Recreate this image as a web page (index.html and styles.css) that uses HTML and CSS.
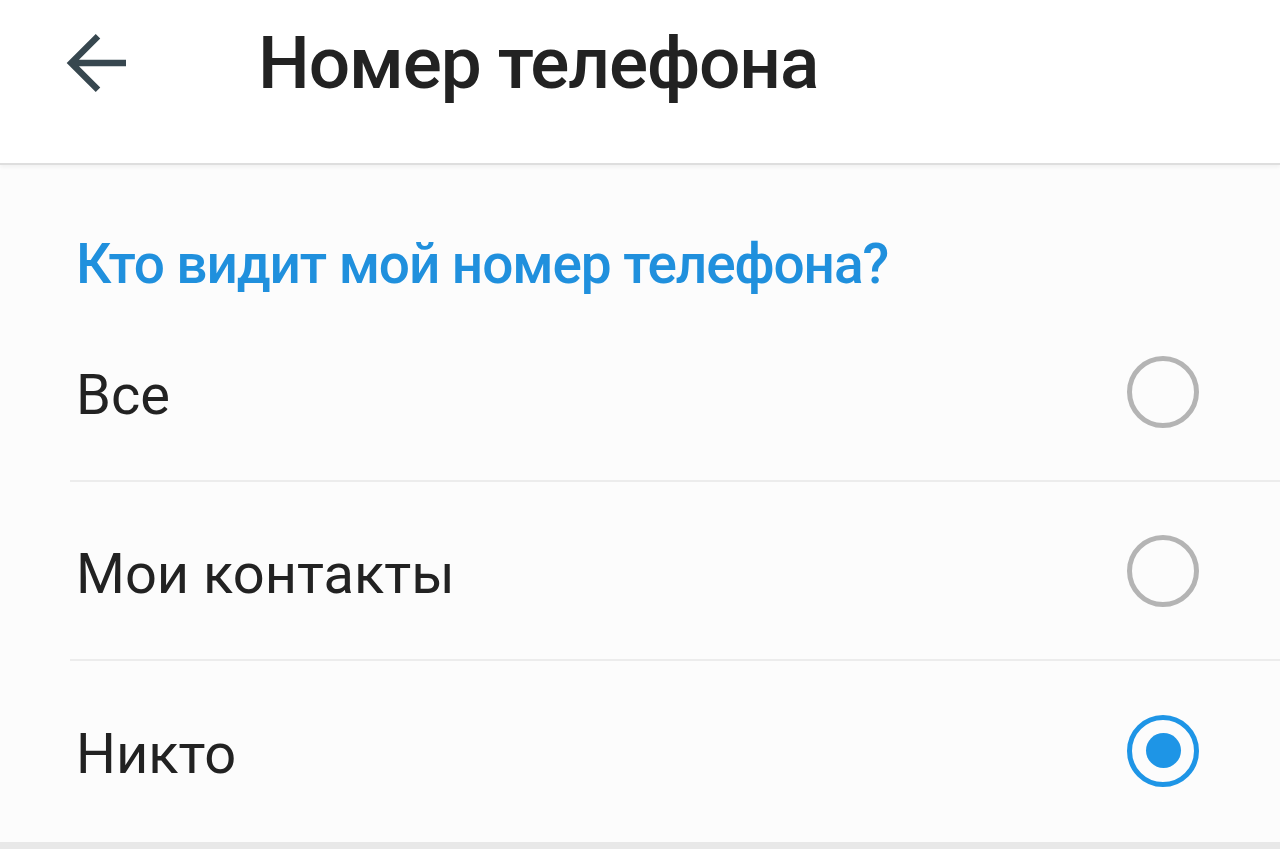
FILE: index.html
```html
<!DOCTYPE html>
<html lang="ru">
<head>
  <meta charset="UTF-8">
  <title>Номер телефона</title>
  <meta name="viewport" content="width=device-width, initial-scale=1.0">
  <link rel="stylesheet" href="styles.css">
</head>
<body>
  <header class="topbar">
    <button class="back" aria-label="Назад">
      <svg width="64" height="64" viewBox="0 0 16 16">
        <path d="M15 8H2M8 1.3L1.3 8L8 14.7" fill="none" stroke="#37474f" stroke-width="1.6"/>
      </svg>
    </button>
    <h1>Номер телефона</h1>
  </header>

  <main class="section">
    <h2>Кто видит мой номер телефона?</h2>
    <ul class="options">
      <li class="option">
        <span>Все</span>
        <span class="radio"></span>
      </li>
      <li class="option">
        <span>Мои контакты</span>
        <span class="radio"></span>
      </li>
      <li class="option">
        <span>Никто</span>
        <span class="radio checked"></span>
      </li>
    </ul>
  </main>
  <div class="bottom"></div>
</body>
</html>
```

FILE: styles.css
```css
*{box-sizing:border-box;margin:0;padding:0;}
body{
  font-family:Roboto,"Noto Sans",sans-serif;
  background:#fcfcfc;
  color:#222;
  height:849px;
  overflow:hidden;
  display:flex;
  flex-direction:column;
}
.topbar{
  height:165px;
  display:flex;
  align-items:center;
  background:#fff;
  border-bottom:2px solid #dedede;
  box-shadow:0 2px 4px rgba(0,0,0,0.05);
  padding-left:66px;
  padding-bottom:38px;
  position:relative;
  z-index:1;
}
.back{
  border:none;
  background:none;
  display:flex;
  width:64px;
  height:64px;
}
.topbar h1{
  margin-left:128px;
  font-size:73px;
  font-weight:500;
  color:#222;
  letter-spacing:-1.1px;
}
.section{
  flex:1;
  background:#fcfcfc;
}
.section h2{
  color:#2090dd;
  font-size:55px;
  font-weight:500;
  padding:66px 0 0 76px;
  line-height:66px;
  letter-spacing:-1.1px;
  height:138px;
}
.options{list-style:none;}
.option{
  height:179px;
  margin-left:70px;
  padding:0 81px 0 6px;
  display:flex;
  align-items:center;
  justify-content:space-between;
  font-size:56px;
  color:#222;
  border-bottom:2px solid #ececec;
}
.option:last-child{border-bottom:none;}
.option span:first-child{margin-top:6px;}
.radio{
  width:72px;
  height:72px;
  border:5px solid #b4b4b4;
  border-radius:50%;
  position:relative;
}
.radio.checked{border-color:#1e95e6;}
.radio.checked::after{
  content:"";
  position:absolute;
  left:50%;
  top:50%;
  width:35px;
  height:35px;
  margin:-17.5px 0 0 -17.5px;
  border-radius:50%;
  background:#1e95e6;
}
.bottom{
  height:7px;
  background:#e8e8e8;
}
```
